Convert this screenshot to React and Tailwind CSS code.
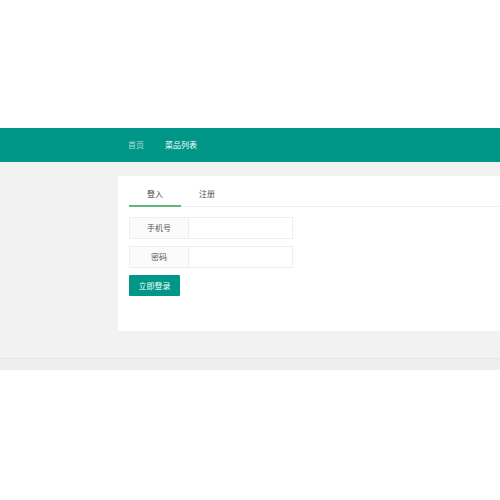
export default function App() {
  const font = { fontFamily: '"Noto Sans CJK SC", "Liberation Sans", sans-serif' };
  return (
    <div className="w-[500px] h-[500px] bg-white overflow-hidden text-[8px]" style={font}>
      <div className="h-[128px]" />
      <div className="h-[34px] bg-[#009688] flex items-center pl-[128px] gap-[21px]">
        <span className="text-white/70">首页</span>
        <span className="text-white">菜品列表</span>
      </div>
      <div className="bg-[#f2f2f2] pt-[14px] pb-[27px] pl-[118px]">
        <div className="bg-white h-[155px] pl-[11px] pt-[10px]">
          <div className="flex border-b border-[#eeeeee] h-[21px]">
            <div className="w-[52px] flex justify-center text-[#444] border-b-2 border-[#5fb878] h-[21px] pt-[2px] -mb-[1px]">登入</div>
            <div className="w-[52px] flex justify-center text-[#555] pt-[2px]">注册</div>
          </div>
          <div className="flex mt-[10px] h-[22px]">
            <div className="w-[60px] bg-[#fbfbfb] border border-[#eeeeee] flex items-center justify-center text-[#555]">手机号</div>
            <div className="w-[104px] border border-l-0 border-[#eeeeee]" />
          </div>
          <div className="flex mt-[7px] h-[22px]">
            <div className="w-[60px] bg-[#fbfbfb] border border-[#eeeeee] flex items-center justify-center text-[#555]">密码</div>
            <div className="w-[104px] border border-l-0 border-[#eeeeee]" />
          </div>
          <div className="mt-[7px] w-[51px] h-[21px] bg-[#009688] text-white flex items-center justify-center rounded-[1px]">立即登录</div>
        </div>
      </div>
      <div className="h-[12px] bg-[#eeeeee] border-t border-[#e6e6e6]" />
    </div>
  );
}
